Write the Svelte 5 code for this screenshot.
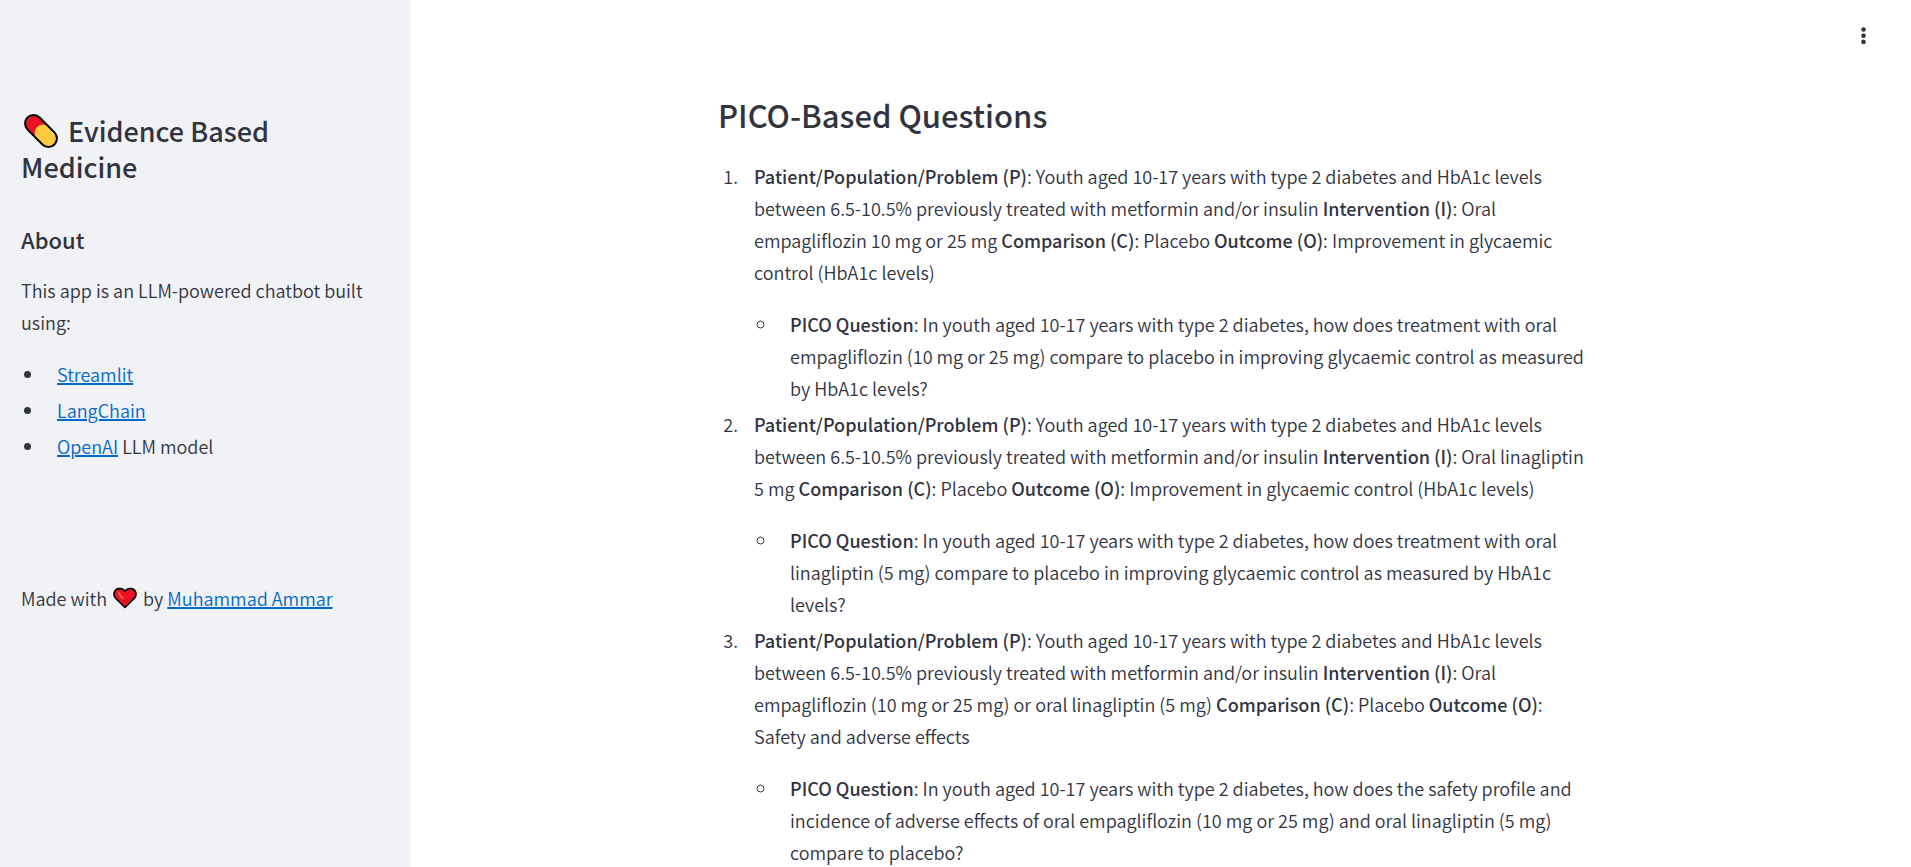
<script>
  const links = [
    { name: 'Streamlit', href: 'https://streamlit.io/', note: '' },
    { name: 'LangChain', href: 'https://python.langchain.com/', note: '' },
    { name: 'OpenAI', href: 'https://platform.openai.com/docs/models', note: ' LLM model' }
  ];

  const population =
    'Youth aged 10-17 years with type 2 diabetes and HbA1c levels between 6.5-10.5% previously treated with metformin and/or insulin';

  const items = [
    {
      intervention: 'Oral empagliflozin 10 mg or 25 mg',
      outcome: 'Improvement in glycaemic control (HbA1c levels)',
      question:
        'In youth aged 10-17 years with type 2 diabetes, how does treatment with oral empagliflozin (10 mg or 25 mg) compare to placebo in improving glycaemic control as measured by HbA1c levels?'
    },
    {
      intervention: 'Oral linagliptin 5 mg',
      outcome: 'Improvement in glycaemic control (HbA1c levels)',
      question:
        'In youth aged 10-17 years with type 2 diabetes, how does treatment with oral linagliptin (5 mg) compare to placebo in improving glycaemic control as measured by HbA1c levels?'
    },
    {
      intervention: 'Oral empagliflozin (10 mg or 25 mg) or oral linagliptin (5 mg)',
      outcome: 'Safety and adverse effects',
      question:
        'In youth aged 10-17 years with type 2 diabetes, how does the safety profile and incidence of adverse effects of oral empagliflozin (10 mg or 25 mg) and oral linagliptin (5 mg) compare to placebo?'
    }
  ];
</script>

<div class="app">
  <aside class="sidebar">
    <h1>
      <svg class="pill" viewBox="0 0 36 36" aria-hidden="true">
        <g transform="rotate(45 18 18)">
          <path d="M20 9.5H8.5a8.5 8.5 0 0 0 0 17H20z" fill="#e81224" />
          <path d="M21 9.5h6.5a8.5 8.5 0 0 1 0 17H21a8.5 8.5 0 0 1 0-17z" fill="#ffc83d" />
          <rect x="-1" y="9.5" width="38" height="17" rx="8.5" fill="none" stroke="#000" stroke-width="2" />
        </g>
      </svg>
      Evidence Based Medicine
    </h1>
    <h2>About</h2>
    <p>This app is an LLM-powered chatbot built using:</p>
    <ul>
      {#each links as link}
        <li><a href={link.href}>{link.name}</a>{link.note}</li>
      {/each}
    </ul>
    <p class="credit">
      Made with
      <svg class="heart" viewBox="0 0 24 22" aria-hidden="true">
        <path d="M12 20.5 2.6 11.2C-.4 8 1 2.4 5.6 1.6 8.2 1.2 10.6 2.2 12 4.3c1.4-2.1 3.8-3.1 6.4-2.7 4.6.8 6 6.4 3 9.6z" fill="#e81224" stroke="#000" stroke-width="1.6" stroke-linejoin="round" />
        <path d="M6 6.2c.2 1.5 1.8 3.4 3.6 4.8" fill="none" stroke="#f4694f" stroke-width="2" stroke-linecap="round" />
      </svg>
      by <a href="https://github.com/">Muhammad Ammar</a>
    </p>
  </aside>

  <main>
    <button class="menu" type="button" aria-label="Main menu">
      <svg viewBox="0 0 20 20" aria-hidden="true">
        <circle cx="10.5" cy="3.5" r="2.3" />
        <circle cx="10.5" cy="9.7" r="2.3" />
        <circle cx="10.5" cy="15.9" r="2.3" />
      </svg>
    </button>
    <article>
      <h2 class="title">PICO-Based Questions</h2>
      <ol>
        {#each items as item}
          <li>
            <p>
              <strong>Patient/Population/Problem (P)</strong>: {population}
              <strong>Intervention (I)</strong>: {item.intervention}
              <strong>Comparison (C)</strong>: Placebo
              <strong>Outcome (O)</strong>: {item.outcome}
            </p>
            <ul>
              <li><strong>PICO Question</strong>: {item.question}</li>
            </ul>
          </li>
        {/each}
      </ol>
    </article>
  </main>
</div>

<style>
  :global(body) {
    margin: 0;
  }

  .app {
    display: flex;
    height: 100vh;
    background: #fff;
    color: #31333f;
    font-family: 'Source Sans Pro', 'Noto Sans CJK SC', sans-serif;
    font-size: 18px;
    font-weight: 350;
    line-height: 32px;
  }

  .sidebar {
    box-sizing: border-box;
    flex: 0 0 411px;
    padding: 113px 21px 32px;
    overflow-y: auto;
    background: #f0f2f6;
  }

  main {
    position: relative;
    flex: 1;
    min-width: 0;
    overflow-y: auto;
    scrollbar-width: none;
  }

  article {
    max-width: 886px;
    margin: 0 auto;
    padding: 94px 20px 120px;
  }

  h1,
  h2,
  p,
  ul,
  ol {
    margin: 0;
    padding: 0;
  }

  ol {
    padding-right: 12px;
  }

  h1,
  h2 {
    font-weight: 500;
  }

  h1 {
    font-size: 27px;
    line-height: 36px;
  }

  h2 {
    margin: 38px 0 19px;
    font-size: 22px;
    line-height: 32px;
  }

  .title {
    margin: 0 0 25px;
    font-size: 31px;
    line-height: 41px;
  }

  p {
    margin-bottom: 20px;
  }

  li {
    margin: 4px 0 4px 24px;
    padding-left: 12px;
  }

  strong {
    font-weight: 500;
  }

  a {
    color: #0068c9;
    text-decoration: underline;
    text-decoration-thickness: 2px;
  }

  .credit {
    margin-top: 120px;
  }

  .pill {
    width: 36px;
    height: 36px;
    margin: 0 3px 0 2px;
    vertical-align: -7px;
    overflow: visible;
  }

  .heart {
    width: 24px;
    height: 22px;
    margin: 0 2px;
    vertical-align: -3px;
  }

  .menu {
    position: absolute;
    top: 20px;
    right: 32px;
    display: grid;
    place-items: center;
    width: 32px;
    height: 32px;
    padding: 0;
    border: 0;
    background: none;
    color: inherit;
    cursor: pointer;
  }

  .menu svg {
    width: 20px;
    height: 20px;
    fill: currentColor;
  }
</style>
